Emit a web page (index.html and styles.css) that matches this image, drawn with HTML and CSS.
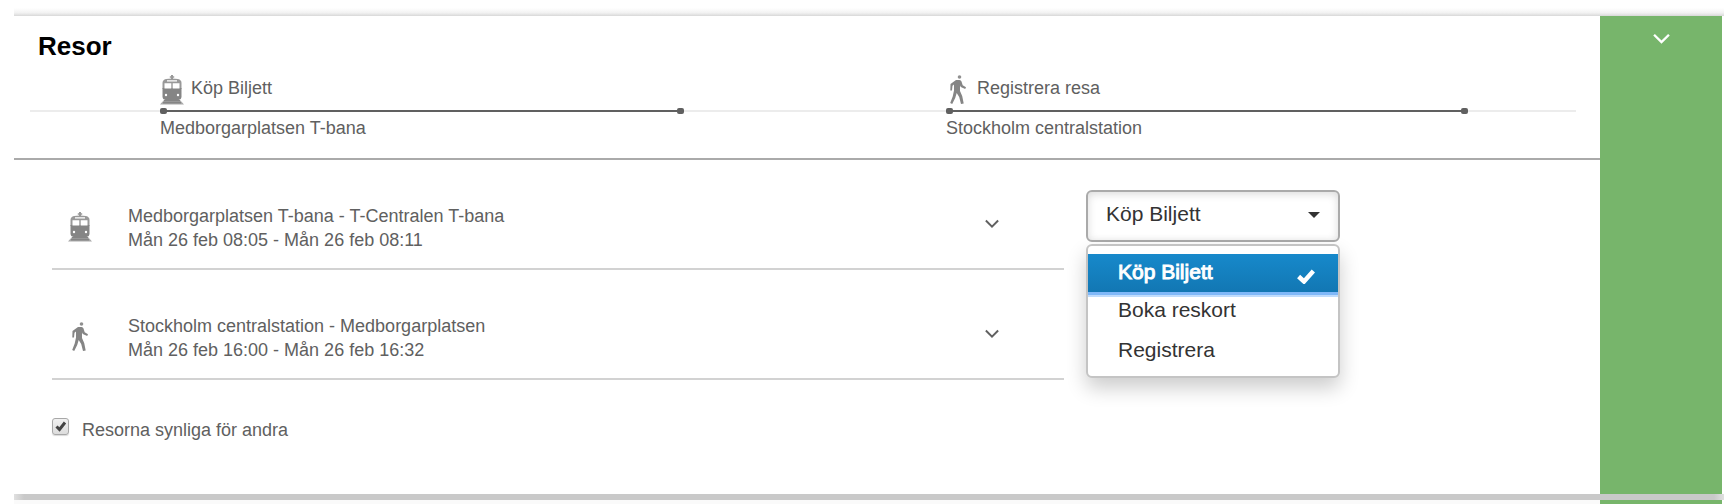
FILE: index.html
```
<!DOCTYPE html>
<html lang="sv">
<head>
    <meta charset="utf-8">
    <title>Resor</title>
    <link rel="stylesheet" href="styles.css">
</head>
<body>
<svg class="sprite" aria-hidden="true">
    <symbol id="icon-train" viewBox="0 0 24 30">
        <path fill="#999" d="M11 0h2v1.200h1.200v1.600H13V4h-2V2.800H9.800V1.200H11z"/>
        <path fill="#999" d="M6 4Q12 2.800 18 4q3.500.8 3.500 4v6h-19V8Q2.500 4.800 6 4z"/>
        <path fill="#858585" d="M2.500 13h19v8.500q0 3-3 3.500h-13q-3-.5-3-3.500z"/>
        <path fill="#fff" d="M7 5.200h10v1.200H7zM4.500 8.200h6.800v5.200H4.500zM12.700 8.200h6.800v5.200h-6.800z"/>
        <circle cx="6" cy="20" r="1.200" fill="#fff"/>
        <circle cx="18" cy="20" r="1.200" fill="#fff"/>
        <path fill="#aaa" d="M4 25h16l4 4.500H0z"/>
        <path fill="#858585" d="M4 25h16v1.500H4zM3 27h18v1.500H3z"/>
    </symbol>
    <symbol id="icon-walk" viewBox="0 0 24 30">
        <circle cx="13.500" cy="2" r="1.800" fill="#909090"/>
        <path fill="#858585" d="M10 5h3.500q1.500 0 2 1.500l1.200 3.800 3.300 1.900-.8 1.700-4.400-1.900-.8-1.500v5.500l2.200 5 1.500 7.500-2.700.5-1.800-7-2.500-4-1.500 5-3 6-2-1 2.500-6.500 1.300-6V9.500L6.500 10.700 6 15.500H4.300l.2-6.500z"/>
    </symbol>
    <symbol id="icon-chevron" viewBox="0 0 16 10">
        <path fill="none" stroke="currentColor" stroke-width="2.200" d="M1 1l7 7 7-7"/>
    </symbol>
</svg>
<main class="page">
    <div class="strip strip-top"></div>
    <section class="card">
        <div class="card-main">
            <header class="card-header">
                <h1 class="title">Resor</h1>
                <div class="timeline">
                    <div class="stop stop-first">
                        <div class="stop-head">
                            <svg class="icon"><use href="#icon-train"/></svg>
                            <span>Köp Biljett</span>
                        </div>
                        <div class="stop-bar"></div>
                        <div class="stop-name">Medborgarplatsen T-bana</div>
                    </div>
                    <div class="stop stop-second">
                        <div class="stop-head">
                            <svg class="icon"><use href="#icon-walk"/></svg>
                            <span>Registrera resa</span>
                        </div>
                        <div class="stop-bar"></div>
                        <div class="stop-name">Stockholm centralstation</div>
                    </div>
                </div>
            </header>
            <div class="card-body">
                <div class="trips">
                    <div class="trip">
                        <svg class="icon"><use href="#icon-train"/></svg>
                        <div class="trip-text">
                            <p>Medborgarplatsen T-bana - T-Centralen T-bana</p>
                            <p>Mån 26 feb 08:05 - Mån 26 feb 08:11</p>
                        </div>
                        <button type="button" class="toggle" aria-label="Visa resa">
                            <svg class="chevron"><use href="#icon-chevron"/></svg>
                        </button>
                    </div>
                    <div class="trip">
                        <svg class="icon"><use href="#icon-walk"/></svg>
                        <div class="trip-text">
                            <p>Stockholm centralstation - Medborgarplatsen</p>
                            <p>Mån 26 feb 16:00 - Mån 26 feb 16:32</p>
                        </div>
                        <button type="button" class="toggle" aria-label="Visa resa">
                            <svg class="chevron"><use href="#icon-chevron"/></svg>
                        </button>
                    </div>
                    <div class="visible">
                        <input type="checkbox" id="visible" class="checkbox" checked>
                        <label for="visible">Resorna synliga för andra</label>
                    </div>
                </div>
                <div class="picker">
                    <select class="picker-select" aria-label="Åtgärd">
                        <option selected>Köp Biljett</option>
                        <option>Boka reskort</option>
                        <option>Registrera</option>
                    </select>
                    <svg class="caret" viewBox="0 0 12 6"><path fill="#333" d="M0 0h12L6 6z"/></svg>
                    <div class="menu">
                        <button type="button" class="menu-item selected">
                            <span>Köp Biljett</span>
                            <svg class="tick" viewBox="0 0 18 15"><path fill="none" stroke="#fff" stroke-width="4.500" d="M1.600 7.500 7 12.500 16.400 2"/></svg>
                        </button>
                        <button type="button" class="menu-item">Boka reskort</button>
                        <button type="button" class="menu-item">Registrera</button>
                    </div>
                </div>
            </div>
        </div>
        <aside class="card-side">
            <button type="button" class="toggle toggle-light" aria-label="Fäll ihop">
                <svg class="chevron chevron-large"><use href="#icon-chevron"/></svg>
            </button>
        </aside>
    </section>
    <div class="strip strip-bottom"></div>
    <section class="card card-next">
        <div class="card-main"></div>
        <div class="card-side"></div>
    </section>
</main>
</body>
</html>
```
FILE: styles.css
```
*,
*:before,
*:after {
    margin: 0;
    padding: 0;
    box-sizing: border-box;
}

body {
    background-color: #ffffff;
    color: #606060;
    font-family: "Liberation Sans", Arial, sans-serif;
    font-size: 18px;
    line-height: 24px;
}

button {
    border: 0;
    background: none;
    font: inherit;
    color: inherit;
    cursor: pointer;
}

.sprite {
    position: absolute;
    width: 0;
    height: 0;
}

.page {
    padding: 8px 8px 0 14px;
}

/* shadows between the cards */
.strip-top {
    height: 8px;
    background: linear-gradient(#ffffff, #f2f2f2 60%, #d8d8d8);
}

.strip-bottom {
    height: 6px;
    background: linear-gradient(to right, #e0e0e0, #c9c9c9 10px, #c9c9c9 calc(100% - 10px), #e0e0e0);
}

.card {
    display: flex;
    margin-right: 2px;
}

.card-main {
    flex: 1;
    min-width: 0;
}

.card-side {
    width: 122px;
    padding-top: 17px;
    background-color: #77b56b;
    line-height: 0;
    text-align: center;
}

.card-next {
    height: 4px;
    background-color: #fafafa;
}

.card-next .card-side {
    padding: 0;
}

.card-header {
    padding: 15px 24px 18px 16px;
    border-bottom: 2px solid #aaaaaa;
}

.title {
    padding-left: 8px;
    color: #000000;
    font-size: 26px;
    line-height: 30px;
}

.timeline {
    display: grid;
    grid-template-columns: 130fr 524fr 262fr 522fr 108fr;
    margin-top: 14px;
    background: linear-gradient(#ececec, #ececec) 0 35px / 100% 2px no-repeat;
}

.stop-first {
    grid-column: 2;
}

.stop-second {
    grid-column: 4;
}

.stop-head {
    display: flex;
    gap: 7px;
    height: 33px;
    line-height: 26px;
}

.stop-bar {
    display: flex;
    justify-content: space-between;
    height: 6px;
    background: linear-gradient(#606060, #606060) center / 100% 2px no-repeat;
}

.stop-bar:before,
.stop-bar:after {
    content: "";
    width: 7px;
    border-radius: 2px;
    background-color: #606060;
}

.stop-name {
    margin-top: 2px;
}

.icon {
    flex: none;
    width: 24px;
    height: 30px;
}

.card-body {
    display: grid;
    grid-template-columns: minmax(0, 1fr) 254px;
    gap: 22px;
    padding: 0 260px 46px 38px;
}

.trip {
    display: flex;
    align-items: flex-start;
    padding: 44px 65px 16px 16px;
    border-bottom: 2px solid #d2d2d2;
}

.trip .icon {
    margin-top: 8px;
}

.trip-text {
    flex: 1;
    margin-left: 36px;
}

.toggle {
    line-height: 0;
}

.trip .toggle {
    margin-top: 15px;
}

.toggle-light {
    color: #ffffff;
}

.chevron {
    width: 14px;
    height: 10px;
}

.chevron-large {
    width: 17px;
    height: 12px;
}

.visible {
    display: flex;
    align-items: flex-start;
    gap: 13px;
    padding-top: 38px;
}

.visible label {
    height: 30px;
}

.checkbox {
    appearance: none;
    width: 17px;
    height: 17px;
    border: 1px solid #a8a8a8;
    border-radius: 3px;
    background: linear-gradient(#f2f2f2, #dcdcdc);
    box-shadow: 0 1px 1px rgba(0, 0, 0, 0.15);
}

.checkbox:checked {
    background: url("data:image/svg+xml,%3Csvg xmlns='http://www.w3.org/2000/svg' viewBox='0 0 15 15'%3E%3Cpath fill='none' stroke='%23444' stroke-width='3' d='M3.500 7.500 6.500 10.500 12 3.500'/%3E%3C/svg%3E") center / 15px 15px no-repeat, linear-gradient(#f2f2f2, #dcdcdc);
}

.picker {
    position: relative;
    padding-top: 30px;
    color: #333333;
    font-size: 21px;
}

.picker-select {
    appearance: none;
    display: block;
    width: 100%;
    height: 52px;
    padding: 0 18px 4px;
    border: 2px solid #aaaaaa;
    border-radius: 6px;
    background-color: #ffffff;
    box-shadow: inset 0 2px 8px rgba(0, 0, 0, 0.15);
    font: inherit;
    color: inherit;
}

.caret {
    position: absolute;
    top: 52px;
    right: 20px;
    width: 12px;
    height: 6px;
}

.menu {
    position: absolute;
    top: 84px;
    left: 0;
    right: 0;
    padding: 8px 0 4px;
    border: 2px solid #c4c4c4;
    border-radius: 6px;
    background-color: #ffffff;
    box-shadow: 0 10px 20px rgba(0, 0, 0, 0.2);
}

.menu-item {
    display: flex;
    align-items: center;
    justify-content: space-between;
    width: 100%;
    height: 40px;
    padding: 0 23px 4px 30px;
}

.menu-item.selected {
    height: 38px;
    padding-bottom: 2px;
    background: linear-gradient(#1789cb, #1277b3);
    box-shadow: 0 3px 0 #80b8f8, 0 5px 0 #c0dcfc;
    color: #ffffff;
    -webkit-text-stroke: 1px #ffffff;
}

.tick {
    width: 18px;
    height: 15px;
    margin-top: 8px;
}
```
